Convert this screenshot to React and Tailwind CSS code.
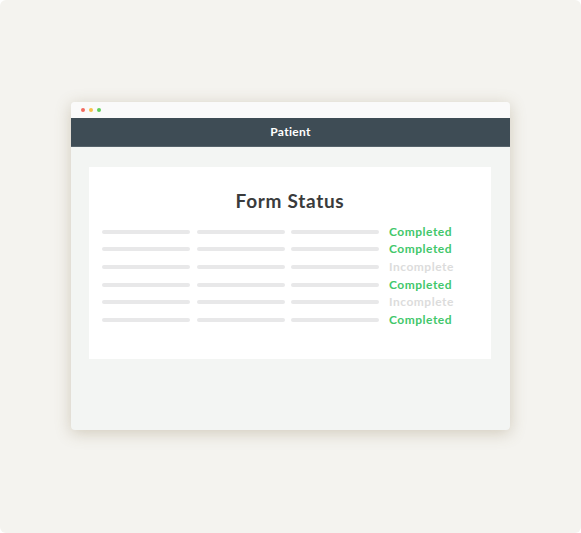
const rows = [
  true, true, false, true, false, true,
];

export default function App() {
  return (
    <div className="w-[581px] h-[533px] bg-white">
      <div className="w-[581px] h-[533px] rounded-md bg-[#f4f3ef] pt-[102px] pl-[71px]" style={{ fontFamily: 'Lato, "Noto Sans", sans-serif' }}>
        <div className="w-[439px] h-[328px] rounded-[4px] bg-[#f3f5f3] overflow-hidden shadow-[0_3px_16px_rgba(130,110,70,0.3)] flex flex-col">
          <div className="h-[16px] bg-[#fafafa] flex items-center gap-[4px] pl-[10px]">
            <span className="w-[4px] h-[4px] rounded-full bg-[#f26a5f]" />
            <span className="w-[4px] h-[4px] rounded-full bg-[#f7c14a]" />
            <span className="w-[4px] h-[4px] rounded-full bg-[#5fcf5a]" />
          </div>
          <div className="h-[29px] bg-[#3e4c55] border-b border-[#56636b] flex items-center justify-center text-white text-[12px] font-bold tracking-[0.3px]">
            Patient
          </div>
          <div className="pt-[20px] pl-[18px]">
            <div className="w-[402px] h-[192px] bg-white pt-[21px] pl-[13px]">
              <div className="text-center pr-[13px] text-[19px] font-bold text-[#3a3b3c] tracking-[0.7px] leading-[26px]">
                Form Status
              </div>
              <div className="mt-[9px] flex flex-col">
                {rows.map((done, i) => (
                  <div key={i} className="h-[17.6px] flex items-center">
                    <div className="w-[88px] h-[4px] rounded-full bg-[#e8e8e9]" />
                    <div className="w-[88px] h-[4px] rounded-full bg-[#e8e8e9] ml-[7px]" />
                    <div className="w-[88px] h-[4px] rounded-full bg-[#e8e8e9] ml-[6px]" />
                    <span className={`ml-[10px] text-[12px] font-bold tracking-[0.5px] ${done ? 'text-[#42c76b]' : 'text-[#dcdcdc]'}`}>
                      {done ? 'Completed' : 'Incomplete'}
                    </span>
                  </div>
                ))}
              </div>
            </div>
          </div>
        </div>
      </div>
    </div>
  );
}
